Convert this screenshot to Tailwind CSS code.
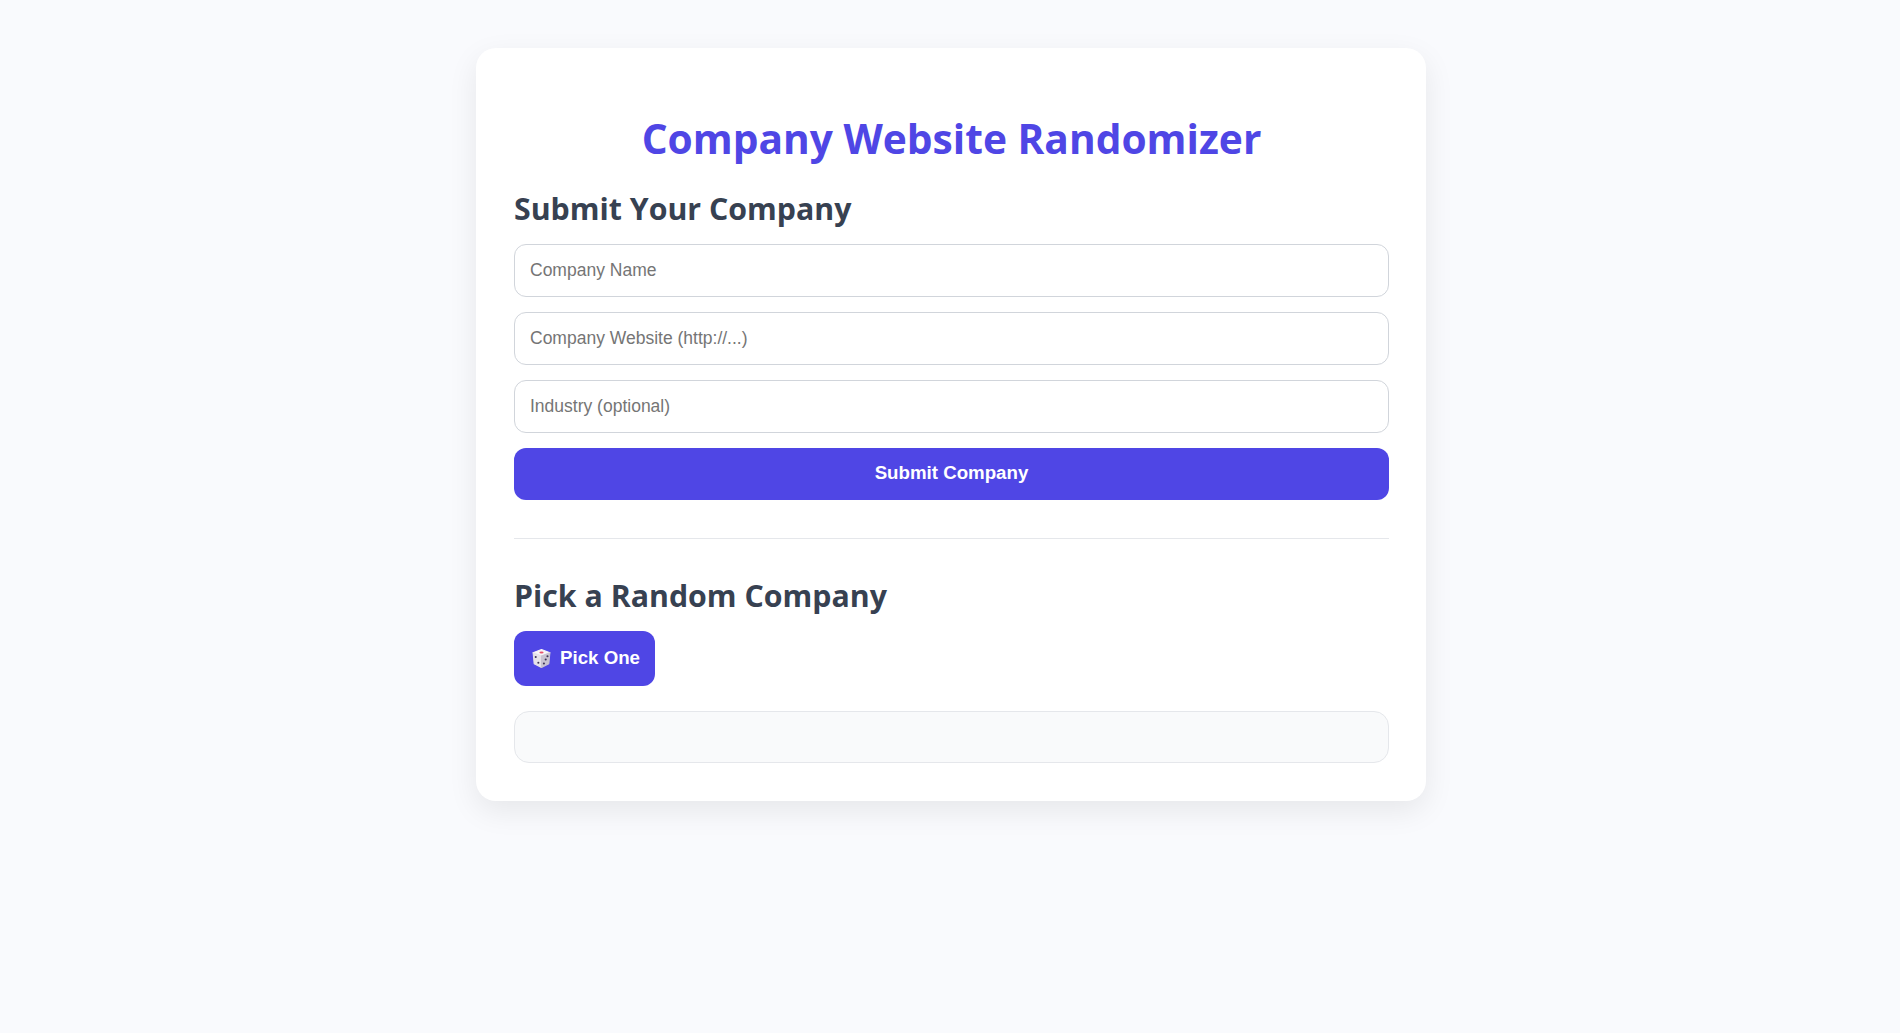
<!DOCTYPE html>
<html lang="en">
  <head>
    <meta charset="UTF-8" />
    <meta name="viewport" content="width=device-width, initial-scale=1.0" />
    <title>Company Website Randomizer</title>
    <script src="https://cdn.jsdelivr.net/npm/@tailwindcss/browser@4"></script>
  </head>

  <body class="min-h-screen bg-[#f9fafd] pl-[2px] font-['Liberation_Sans',sans-serif]">
    <main class="mx-auto mt-12 w-[950px] rounded-[20px] bg-white pt-[64px] pr-[37px] pb-[38px] pl-[38px] shadow-[0_10px_30px_rgba(0,0,0,0.08)]">
      <h1 class="mb-[24px] text-center font-['Open_Sans',sans-serif] text-[40.700px] leading-[52px] font-bold text-[#4f46e5]">
        Company Website Randomizer
      </h1>

      <h2 class="mb-[14px] font-['Open_Sans',sans-serif] text-[30.300px] leading-[42px] font-bold text-[#374151]">
        Submit Your Company
      </h2>
      <form class="flex flex-col gap-[15px]">
        <input
          class="h-[53px] w-full rounded-[12px] border border-[#d1d5db] px-[15px] pb-px text-[17.500px] placeholder:text-[#757575]"
          type="text"
          placeholder="Company Name" />
        <input
          class="h-[53px] w-full rounded-[12px] border border-[#d1d5db] px-[15px] pb-px text-[17.500px] placeholder:text-[#757575]"
          type="text"
          placeholder="Company Website (http://...)" />
        <input
          class="h-[53px] w-full rounded-[12px] border border-[#d1d5db] px-[15px] pb-px text-[17.500px] placeholder:text-[#757575]"
          type="text"
          placeholder="Industry (optional)" />
        <button
          type="button"
          class="h-[52px] w-full rounded-[12px] bg-[#4f46e5] pb-px text-[18.700px] font-bold text-white">
          Submit Company
        </button>
      </form>

      <hr class="mt-[38px] mb-[36px] border-[#e5e7eb]" />

      <h2 class="mb-[14px] font-['Open_Sans',sans-serif] text-[30.300px] leading-[42px] font-bold text-[#374151]">
        Pick a Random Company
      </h2>
      <button
        type="button"
        class="flex h-[55px] items-center gap-[8px] rounded-[12px] bg-[#4f46e5] pr-[15px] pl-[17px] text-[18.700px] font-bold text-white">
        <svg class="h-[21px] w-[21px]" viewBox="0 0 20 20">
          <g stroke-width="1" stroke-linejoin="round">
            <path fill="#f7f5f7" stroke="#f7f5f7" d="M10 1.500 18 4.500 10 7.500 2 4.500z" />
            <path fill="#e6e2e9" stroke="#e6e2e9" d="M2 4.500 10 7.500V18.500L3 15z" />
            <path fill="#c9c3d1" stroke="#c9c3d1" d="M18 4.500 10 7.500V18.500L17 15z" />
          </g>
          <ellipse cx="10" cy="4.300" rx="2" ry="1" fill="#e8506a" />
          <g fill="#3d3556">
            <circle cx="4.500" cy="8.500" r="1" />
            <circle cx="7" cy="14" r="1" />
            <circle cx="15.700" cy="7.800" r="1" />
            <circle cx="14" cy="11" r="1" />
            <circle cx="12.300" cy="14.700" r="1" />
          </g>
        </svg>
        Pick One
      </button>

      <div class="mt-[25px] h-[52px] rounded-[15px] border border-[#e5e7eb] bg-[#f9fafb]"></div>
    </main>
  </body>
</html>
